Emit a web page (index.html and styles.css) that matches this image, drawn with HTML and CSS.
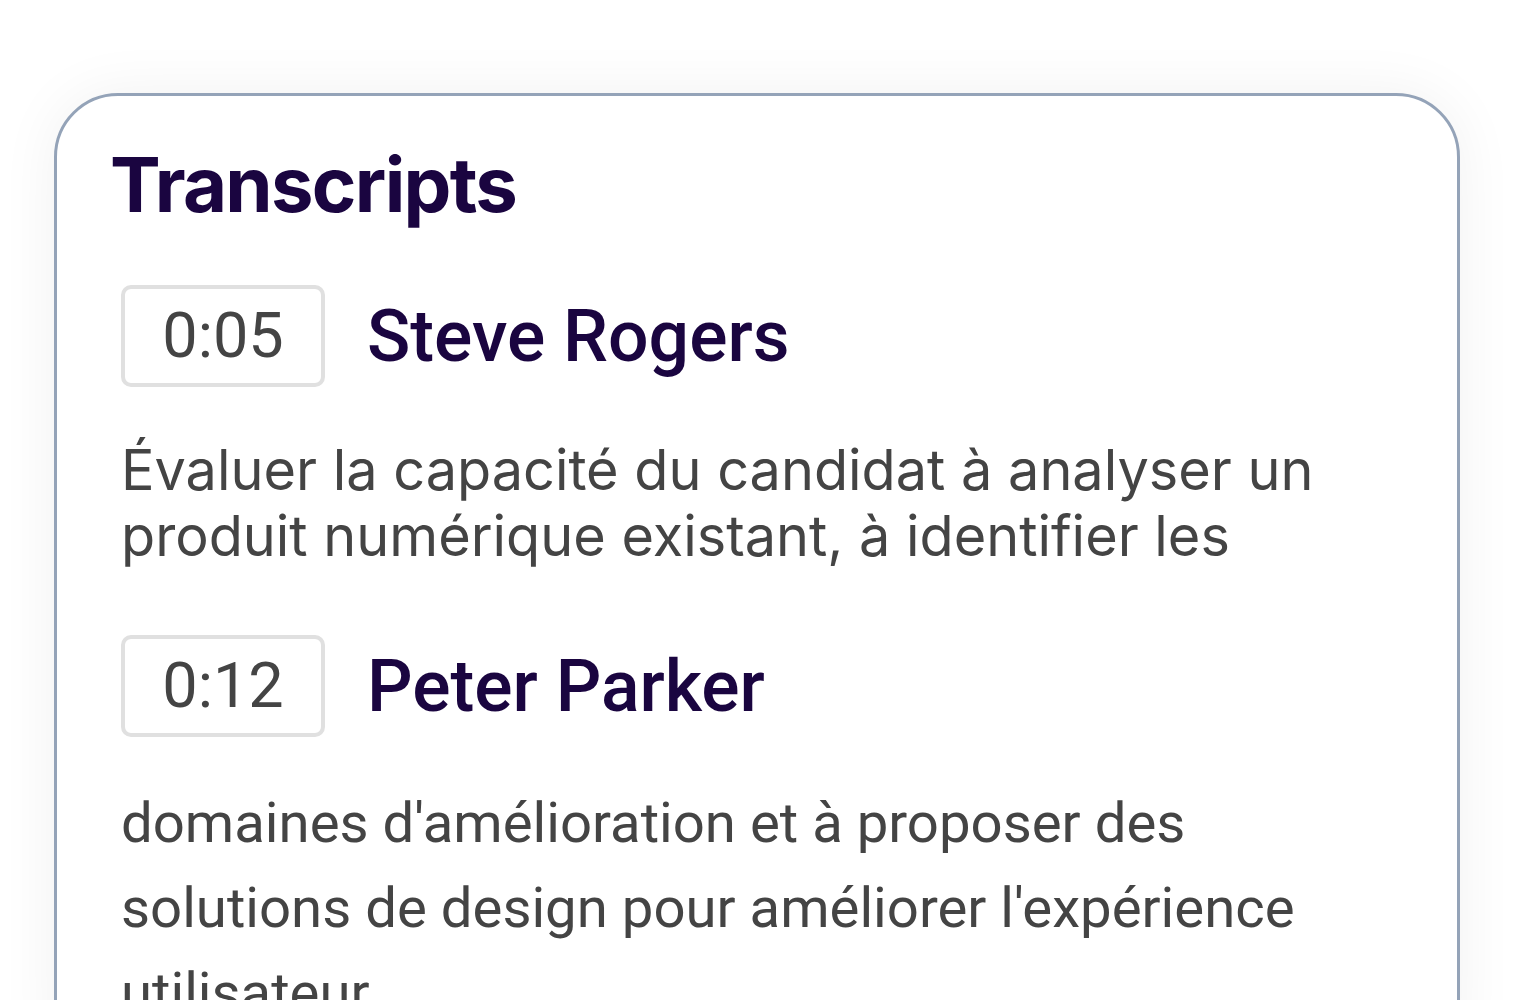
FILE: index.html
```html
<!DOCTYPE html>
<html lang="fr">
<head>
  <meta charset="UTF-8" />
  <title>Transcripts</title>
  <link rel="stylesheet" href="styles.css">
</head>
<body>

  <div class="card">
    <h2 class="card-title">Transcripts</h2>

    <div class="entry">
      <div class="entry-head">
        <span class="stamp">0:05</span>
        <span class="speaker">Steve Rogers</span>
      </div>
      <p class="line line-first">Évaluer la capacité du candidat à analyser un produit numérique existant, à identifier les</p>
    </div>

    <div class="entry">
      <div class="entry-head">
        <span class="stamp">0:12</span>
        <span class="speaker">Peter Parker</span>
      </div>
      <p class="line line-next">domaines d'amélioration et à proposer des solutions de design pour améliorer l'expérience utilisateur</p>
    </div>
  </div>

</body>
</html>
```

FILE: styles.css
```css
body {
  margin: 0;
  background: #fff;
  font-family: 'Roboto', sans-serif;
}
.card {
  box-sizing: border-box;
  width: 1406px;
  margin: 93px 0 0 54px;
  padding: 43px 56px 40px 53px;
  border: 3px solid #94a3b8;
  border-radius: 64px;
  background: #fff;
  box-shadow: 0 0 60px rgba(15, 23, 42, 0.06);
}
.card-title {
  margin: 0;
  font-family: 'Inter', sans-serif;
  font-weight: 700;
  font-size: 76px;
  line-height: 91px;
  letter-spacing: -1.7px;
  color: #1a0540;
}
.entry {
  padding: 0 11px;
  max-width: 1240px;
}
.entry-head {
  display: flex;
  align-items: center;
  gap: 42px;
  margin-top: 55px;
}
.entry + .entry .entry-head {
  margin-top: 66px;
}
.stamp {
  box-sizing: border-box;
  width: 204px;
  height: 102px;
  border: 4px solid #e0e0e0;
  border-radius: 10px;
  text-align: center;
  line-height: 94px;
  font-size: 63px;
  color: #444;
}
.speaker {
  font-weight: 500;
  font-size: 71.5px;
  color: #1a0540;
}
.line {
  margin: 0;
  color: #444;
}
.line-first {
  margin-top: 50px;
  font-family: 'Inter', sans-serif;
  font-size: 55.8px;
  line-height: 66px;
}
.line-next {
  margin-top: 44px;
  font-size: 56.3px;
  line-height: 85px;
}
```
